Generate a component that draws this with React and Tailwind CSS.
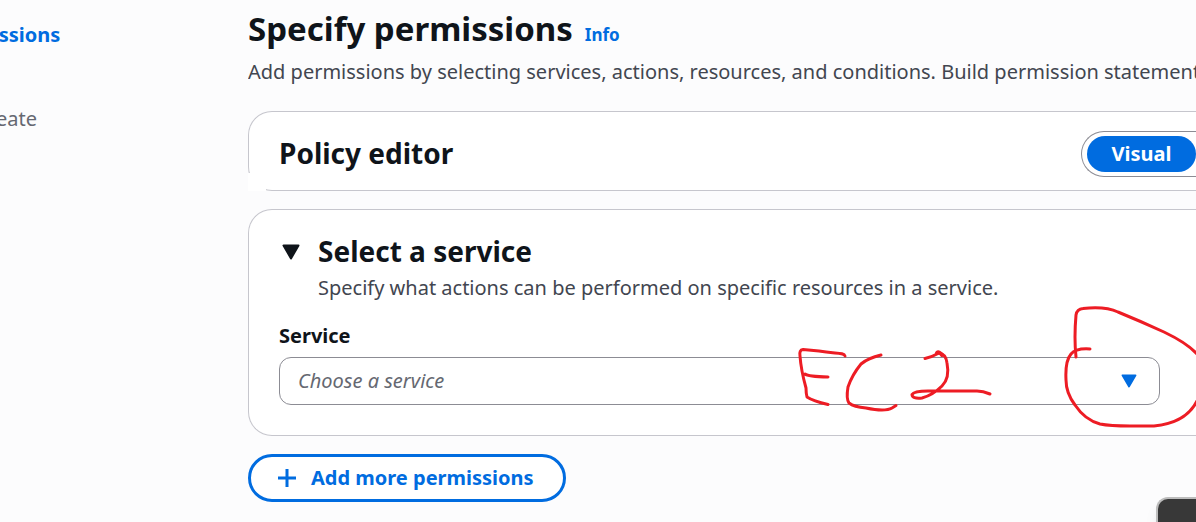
import React from "react";

function CaretDown({ className }) {
  return (
    <svg viewBox="0 0 18 16" className={className} aria-hidden="true">
      <path d="M1.5 1.5h15L9 14.5z" fill="currentColor" stroke="currentColor" strokeWidth="2" strokeLinejoin="round" />
    </svg>
  );
}

function Steps() {
  return (
    <nav aria-label="Steps" className="flex w-[248px] shrink-0 flex-col items-start gap-14 pt-[21px] text-xl leading-7">
      <a href="#permissions" className="-ml-15 w-30 text-right font-bold text-[#006ce0]">Permissions</a>
      <span className="-ml-[83px] w-30 text-right text-[#656871]">and create</span>
    </nav>
  );
}

function PolicyEditor() {
  return (
    <section className="relative flex h-20 items-center justify-between rounded-l-3xl border border-r-0 border-[#c6c6cd] bg-white pt-1 pl-[30px]">
      <span className="absolute -bottom-px -left-px size-[18px] bg-white" />
      <h2 className="text-[28px] leading-9 font-bold">Policy editor</h2>
      <div className="mt-px flex h-[46px] items-center rounded-l-full border border-r-0 border-[#8c8c94] pl-[5px]">
        <button type="button" className="h-9 w-[109px] rounded-full bg-[#006ce0] text-xl font-bold text-white">Visual</button>
      </div>
    </section>
  );
}

function InkNotes() {
  return (
    <svg
      viewBox="780 295 416 140"
      className="pointer-events-none absolute -top-[62px] -right-9 h-[140px] w-[416px]"
      fill="none"
      stroke="#ed1c24"
      strokeWidth="3"
      strokeLinecap="round"
      strokeLinejoin="round"
      aria-hidden="true"
    >
      <path d="M845 356C844 352 835 354 819 351L803 349.5Q799 350 800 356Q801 370 806 388Q806 393 807 397Q813 401 828 404.500M805 374Q808 376.500 828 377" />
      <path d="M881 355Q868 358 861 364Q852 375 848 387Q846 399 849 403Q854 407 866 408Q885 412 892 408L896 405.500" />
      <path d="M925 358.500Q932 357 939 353Q946 354 947 363Q950 378 942 386Q933 395 922 398Q912 399 912 394.500Q914 391 928 391H977Q983 391 990 394" />
      <path d="M937 353q2-2 5 2" strokeWidth="4" />
      <path d="M1076 357Q1074 338 1076 315Q1077 309 1083 308.500Q1105 306 1118 312Q1140 321 1164 332Q1187 343 1197 354" />
      <path d="M1090 349Q1076 348 1071 354Q1065 361 1066 380Q1066 393 1075 405Q1085 420 1100 424Q1110 426 1130 426H1154Q1186 423 1197 401" />
    </svg>
  );
}

function ServicePanel() {
  return (
    <section className="rounded-l-3xl border border-r-0 border-[#c6c6cd] bg-white pt-[23px] pr-9 pb-[30px] pl-[30px]">
      <div className="flex gap-[17px]">
        <button type="button" aria-label="Collapse section" className="mt-[11px] flex h-4 w-[22px] justify-end">
          <CaretDown className="h-4 w-5" />
        </button>
        <div>
          <h2 className="text-[28px] leading-9 font-bold">Select a service</h2>
          <p className="mt-[3px] text-xl leading-8 text-[#424650]">
            Specify what actions can be performed on specific resources in a service.
          </p>
        </div>
      </div>
      <label htmlFor="service" className="mt-[18px] block text-xl leading-7 font-bold">Service</label>
      <div className="relative mt-[7px]">
        <select
          id="service"
          defaultValue=""
          className="block h-12 w-full appearance-none rounded-xl border border-[#8c8c94] bg-white px-[18px] text-xl text-[#656871] italic"
        >
          <option value="">Choose a service</option>
        </select>
        <CaretDown className="pointer-events-none absolute top-[17px] right-[23px] h-[14px] w-4 text-[#006ce0]" />
        <InkNotes />
      </div>
    </section>
  );
}

export default function App() {
  return (
    <div className="relative flex min-h-screen overflow-hidden bg-[#fcfcfd] font-['Noto_Sans',sans-serif] text-[#0f141a]">
      <Steps />
      <main className="min-w-0 flex-1 pt-[7px]">
        <div className="flex items-baseline gap-3">
          <h1 className="text-[33px] leading-[44px] font-bold">Specify permissions</h1>
          <a href="#info" className="text-[17px] leading-6 font-bold text-[#006ce0]">Info</a>
        </div>
        <p className="mt-[5px] overflow-hidden text-xl leading-8 whitespace-nowrap text-[#424650]">
          Add permissions by selecting services, actions, resources, and conditions. Build permission statements
        </p>
        <div className="mt-[23px] flex flex-col gap-[18px]">
          <PolicyEditor />
          <ServicePanel />
          <button
            type="button"
            className="flex h-12 items-center gap-[15px] self-start rounded-full border-[3px] border-[#006ce0] bg-white pr-[29px] pl-[27px] text-xl font-bold text-[#006ce0]"
          >
            <svg viewBox="0 0 18 18" className="size-[18px]" stroke="currentColor" strokeWidth="3" aria-hidden="true">
              <path d="M9 0v18M0 9h18" />
            </svg>
            Add more permissions
          </button>
        </div>
      </main>
      <div className="absolute right-0 bottom-0 h-[25px] w-10 rounded-tl-xl border-t-2 border-l-2 border-[#bdbdbd] bg-[#383838] shadow-lg" />
    </div>
  );
}
